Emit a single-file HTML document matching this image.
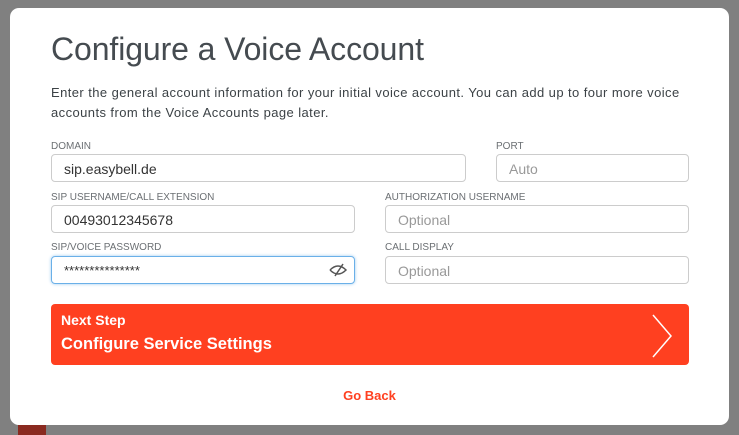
<!DOCTYPE html><html><head><style>
body{margin:0;width:739px;height:435px;background:#808080;font-family:"Liberation Sans",sans-serif;position:relative;overflow:hidden}
.m{position:absolute;left:10px;top:8px;width:719px;height:417px;background:#fff;border-radius:9px}
.a{position:absolute}
h1{position:absolute;left:41px;top:23px;margin:0;font-weight:normal;font-size:32px;color:#454b50;letter-spacing:-0.1px}
p{position:absolute;left:41px;top:75px;margin:0;font-size:13px;line-height:20px;color:#3c4246;width:648px;letter-spacing:0.42px}
.l{position:absolute;font-size:10px;color:#6b6f73}
.i{position:absolute;box-sizing:border-box;height:28px;border:1px solid #ccc;border-radius:4px;font-size:14px;padding:6px 12px;color:#333}
.ph{color:#999}
.btn{position:absolute;left:41px;top:296px;width:638px;height:61px;background:#ff4020;border-radius:4px;color:#fff}
</style></head><body>
<div class="a" style="left:18px;top:425px;width:28px;height:10px;background:#8a2a20"></div>
<div class="m">
<h1>Configure a Voice Account</h1>
<p>Enter the general account information for your initial voice account. You can add up to four more voice accounts from the Voice Accounts page later.</p>
<div class="l" style="left:41px;top:133px">DOMAIN</div>
<div class="i" style="left:41px;top:146px;width:415px">sip.easybell.de</div>
<div class="l" style="left:486px;top:133px">PORT</div>
<div class="i ph" style="left:486px;top:146px;width:193px">Auto</div>
<div class="l" style="left:41px;top:184px">SIP USERNAME/CALL EXTENSION</div>
<div class="i" style="left:41px;top:197px;width:304px">00493012345678</div>
<div class="l" style="left:375px;top:184px">AUTHORIZATION USERNAME</div>
<div class="i ph" style="left:375px;top:197px;width:304px">Optional</div>
<div class="l" style="left:41px;top:234px">SIP/VOICE PASSWORD</div>
<div class="i" style="left:41px;top:248px;width:304px;border-color:#6ab0e8;box-shadow:0 0 3px #9cc9ee;font-size:13px">***************
<svg class="a" style="right:6px;top:5px" width="20" height="16" viewBox="0 0 20 16"><path d="M2 8Q10 0 18 8Q10 16 2 8M7 14L15 2" fill="none" stroke="#555" stroke-width="1.5"/></svg></div>
<div class="l" style="left:375px;top:234px">CALL DISPLAY</div>
<div class="i ph" style="left:375px;top:248px;width:304px">Optional</div>
<div class="btn"><div class="a" style="left:10px;top:8px;font-size:14px;font-weight:bold">Next Step</div>
<div class="a" style="left:10px;top:31px;font-size:16.5px;font-weight:bold">Configure Service Settings</div>
<svg class="a" style="left:600px;top:10px" width="24" height="44"><path d="M2 1L20 22L2 43" fill="none" stroke="#fff" stroke-width="1.5"/></svg></div>
<div class="a" style="left:0;width:719px;text-align:center;top:380px;font-size:13px;font-weight:bold;color:#ff4020">Go Back</div>
</div>
</body></html>
